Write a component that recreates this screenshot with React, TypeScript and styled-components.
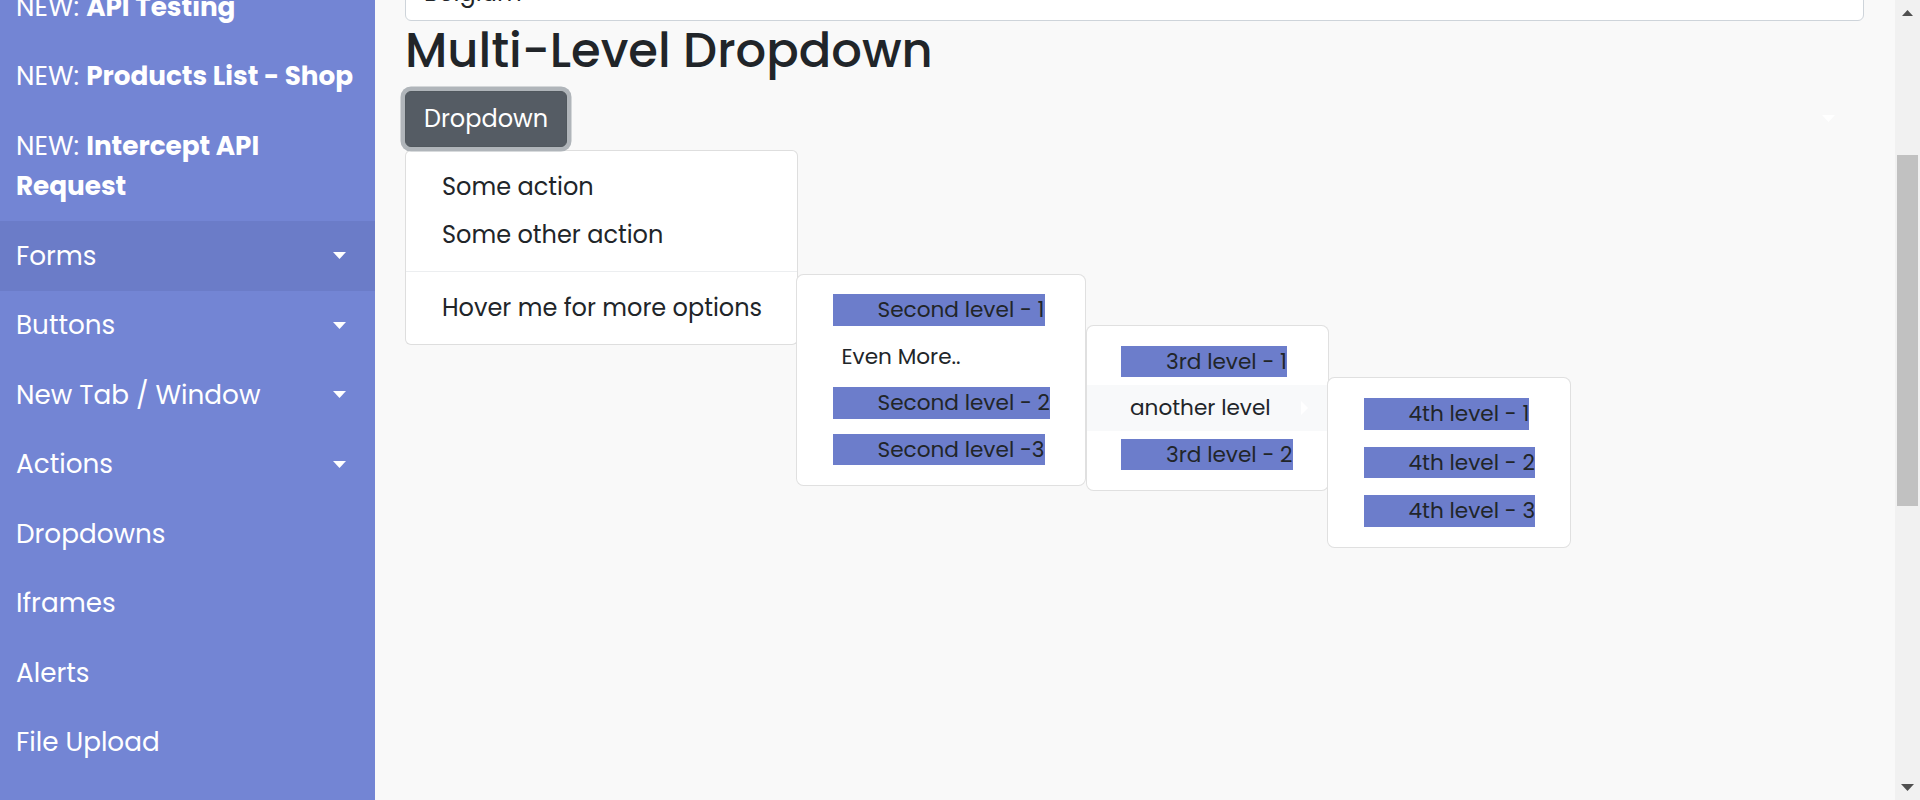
import React from "react";
import styled, { createGlobalStyle } from "styled-components";

const GlobalStyle = createGlobalStyle`
  html, body {
    margin: 0;
    padding: 0;
    overflow: hidden;
  }
  body {
    font-family: Poppins, "Open Sans", Arial, sans-serif;
    color: #212529;
  }
`;

const Page = styled.div`
  display: flex;
  width: 1920px;
  height: 800px;
  overflow: hidden;
  background: #f9f9f9;
`;

/* ---------- sidebar ---------- */

const Sidebar = styled.nav`
  width: 375px;
  flex-shrink: 0;
  background: #7385d4;
  overflow: hidden;
`;

const NavList = styled.ul`
  list-style: none;
  margin: -28px 0 0;
  padding: 0;
`;

const NavItem = styled.li<{ $active?: boolean }>`
  display: flex;
  align-items: center;
  justify-content: space-between;
  padding: 14.5px 29px 14.5px 16px;
  font-size: 26.25px;
  line-height: 40.5px;
  color: #fff;
  background: ${(p) => (p.$active ? "#6b7cc8" : "transparent")};

  b {
    font-weight: 700;
  }
`;

const NavLabel = styled.span`
  white-space: nowrap;
`;

const CaretDown = ({ color = "#fff" }: { color?: string }) => (
  <svg width="13" height="7" viewBox="0 0 13 7">
    <polygon points="0,0 13,0 6.5,7" fill={color} />
  </svg>
);

const CaretRight = () => (
  <svg width="7" height="14" viewBox="0 0 7 14">
    <polygon points="0,0 7,7 0,14" fill="#fff" />
  </svg>
);

/* ---------- main ---------- */

const Main = styled.main`
  flex: 1;
  min-width: 0;
  padding: 0 31px 0 30px;
`;

const SelectBox = styled.div`
  height: 57px;
  margin-top: -36px;
  box-sizing: border-box;
  display: flex;
  align-items: center;
  justify-content: space-between;
  padding: 0 18px;
  background: #fff;
  border: 1.5px solid #ced4da;
  border-radius: 6px;
  font-size: 24px;
  color: #212529;
`;

const Heading = styled.h2`
  margin: 1px 0 11px;
  font-size: 48px;
  font-weight: 500;
  line-height: 57.6px;
  color: #212529;
`;

const ButtonRow = styled.div`
  display: flex;
  align-items: center;
  justify-content: space-between;
  padding-right: 29px;
`;

const ToggleButton = styled.button`
  width: 162px;
  height: 56px;
  padding: 0;
  font-family: inherit;
  font-size: 24px;
  color: #fff;
  background: #555c64;
  border: 1.5px solid #51585e;
  border-radius: 6px;
  box-shadow: 0 0 0 4.5px #b0b5ba;
`;

const Menu = styled.ul`
  list-style: none;
  margin: 3px 0 0;
  padding: 12px 0;
  width: 393px;
  box-sizing: border-box;
  background: #fff;
  border: 1.5px solid rgba(0, 0, 0, 0.13);
  border-radius: 6px;
`;

const MenuItem = styled.li`
  position: relative;
  padding: 6px 36px;
  font-size: 24px;
  line-height: 36px;
  white-space: nowrap;
`;

const Divider = styled.li`
  height: 0;
  margin: 12px 0;
  border-top: 1.5px solid #eceef0;
`;

const SubMenu = styled.ul<{ $top: number; $left: number; $width: number }>`
  position: absolute;
  top: ${(p) => p.$top}px;
  left: ${(p) => p.$left}px;
  width: ${(p) => p.$width}px;
  box-sizing: border-box;
  list-style: none;
  margin: 0;
  padding: 12px 0;
  background: #fff;
  border: 1.5px solid rgba(0, 0, 0, 0.12);
  border-radius: 7.5px;
  z-index: 2;
`;

const SubItem = styled.li<{ $pad: number; $gap?: number; $hover?: boolean }>`
  position: relative;
  display: flex;
  align-items: center;
  justify-content: space-between;
  padding: ${(p) => p.$gap ?? 7.5}px 19.5px ${(p) => p.$gap ?? 7.5}px ${(p) => p.$pad}px;
  font-size: 21.6px;
  line-height: 31.5px;
  white-space: nowrap;
  background: ${(p) => (p.$hover ? "#f8f9fa" : "transparent")};
`;

const LevelLink = styled.span`
  display: inline-block;
  padding-left: 45px;
  background: #6c7dcb;
  color: #212529;
`;

const PlainLink = styled.span`
  padding-left: 9px;
  color: #212529;
`;

/* ---------- fake scrollbar ---------- */

const ScrollTrack = styled.div`
  width: 25px;
  flex-shrink: 0;
  display: flex;
  flex-direction: column;
  align-items: center;
  background: #f1f1f1;
`;

const ScrollArrow = styled.div`
  height: 25px;
  display: flex;
  align-items: center;
  justify-content: center;
`;

const ScrollThumb = styled.div`
  width: 21px;
  height: 351px;
  margin-top: 130px;
  background: #c1c1c1;
`;

const ScrollSpacer = styled.div`
  flex: 1;
`;

type NavEntry = {
  label: string[];
  isNew?: boolean;
  caret?: boolean;
  active?: boolean;
};

const navItems: NavEntry[] = [
  { label: ["API Testing"], isNew: true },
  { label: ["Products List - Shop"], isNew: true },
  { label: ["Intercept API", "Request"], isNew: true },
  { label: ["Forms"], caret: true, active: true },
  { label: ["Buttons"], caret: true },
  { label: ["New Tab / Window"], caret: true },
  { label: ["Actions"], caret: true },
  { label: ["Dropdowns"] },
  { label: ["Iframes"] },
  { label: ["Alerts"] },
  { label: ["File Upload"] },
];

export default function App() {
  return (
    <>
      <GlobalStyle />
      <Page>
        <Sidebar>
          <NavList>
            {navItems.map((item) => {
              const text = item.label.map((line, i) => (
                <React.Fragment key={line}>
                  {i > 0 && <br />}
                  {line}
                </React.Fragment>
              ));
              return (
                <NavItem key={item.label.join(" ")} $active={item.active}>
                  <NavLabel>
                    {item.isNew ? (
                      <>
                        NEW: <b>{text}</b>
                      </>
                    ) : (
                      text
                    )}
                  </NavLabel>
                  {item.caret && <CaretDown />}
                </NavItem>
              );
            })}
          </NavList>
        </Sidebar>

        <Main>
          <SelectBox>
            <span>Belgium</span>
            <svg width="24" height="24" viewBox="0 0 16 16">
              <path d="M2 5l6 6 6-6" fill="none" stroke="#343a40" strokeWidth="2" strokeLinecap="round" strokeLinejoin="round" />
            </svg>
          </SelectBox>

          <Heading>Multi-Level Dropdown</Heading>

          <ButtonRow>
            <ToggleButton>Dropdown</ToggleButton>
            <CaretDown />
          </ButtonRow>

          <Menu>
            <MenuItem>Some action</MenuItem>
            <MenuItem>Some other action</MenuItem>
            <Divider />
            <MenuItem>
              Hover me for more options
              <SubMenu $top={-10} $left={390} $width={290}>
                <SubItem $pad={35.5}>
                  <LevelLink>Second level - 1</LevelLink>
                </SubItem>
                <SubItem $pad={35.5}>
                  <PlainLink>Even More..</PlainLink>
                  <SubMenu $top={-8} $left={288.5} $width={243}>
                    <SubItem $pad={34.5}>
                      <LevelLink>3rd level - 1</LevelLink>
                    </SubItem>
                    <SubItem $pad={34.5} $hover>
                      <PlainLink>another level</PlainLink>
                      <CaretRight />
                      <SubMenu $top={-8} $left={240.5} $width={244}>
                        <SubItem $pad={35.5} $gap={8.5}>
                          <LevelLink>4th level - 1</LevelLink>
                        </SubItem>
                        <SubItem $pad={35.5} $gap={8.5}>
                          <LevelLink>4th level - 2</LevelLink>
                        </SubItem>
                        <SubItem $pad={35.5} $gap={8.5}>
                          <LevelLink>4th level - 3</LevelLink>
                        </SubItem>
                      </SubMenu>
                    </SubItem>
                    <SubItem $pad={34.5}>
                      <LevelLink>3rd level - 2</LevelLink>
                    </SubItem>
                  </SubMenu>
                </SubItem>
                <SubItem $pad={35.5}>
                  <LevelLink>Second level - 2</LevelLink>
                </SubItem>
                <SubItem $pad={35.5}>
                  <LevelLink>Second level -3</LevelLink>
                </SubItem>
              </SubMenu>
            </MenuItem>
          </Menu>
        </Main>

        <ScrollTrack>
          <ScrollArrow>
            <svg width="11" height="6" viewBox="0 0 11 6">
              <polygon points="0,6 11,6 5.5,0" fill="#505050" />
            </svg>
          </ScrollArrow>
          <ScrollThumb />
          <ScrollSpacer />
          <ScrollArrow>
            <CaretDown color="#505050" />
          </ScrollArrow>
        </ScrollTrack>
      </Page>
    </>
  );
}
